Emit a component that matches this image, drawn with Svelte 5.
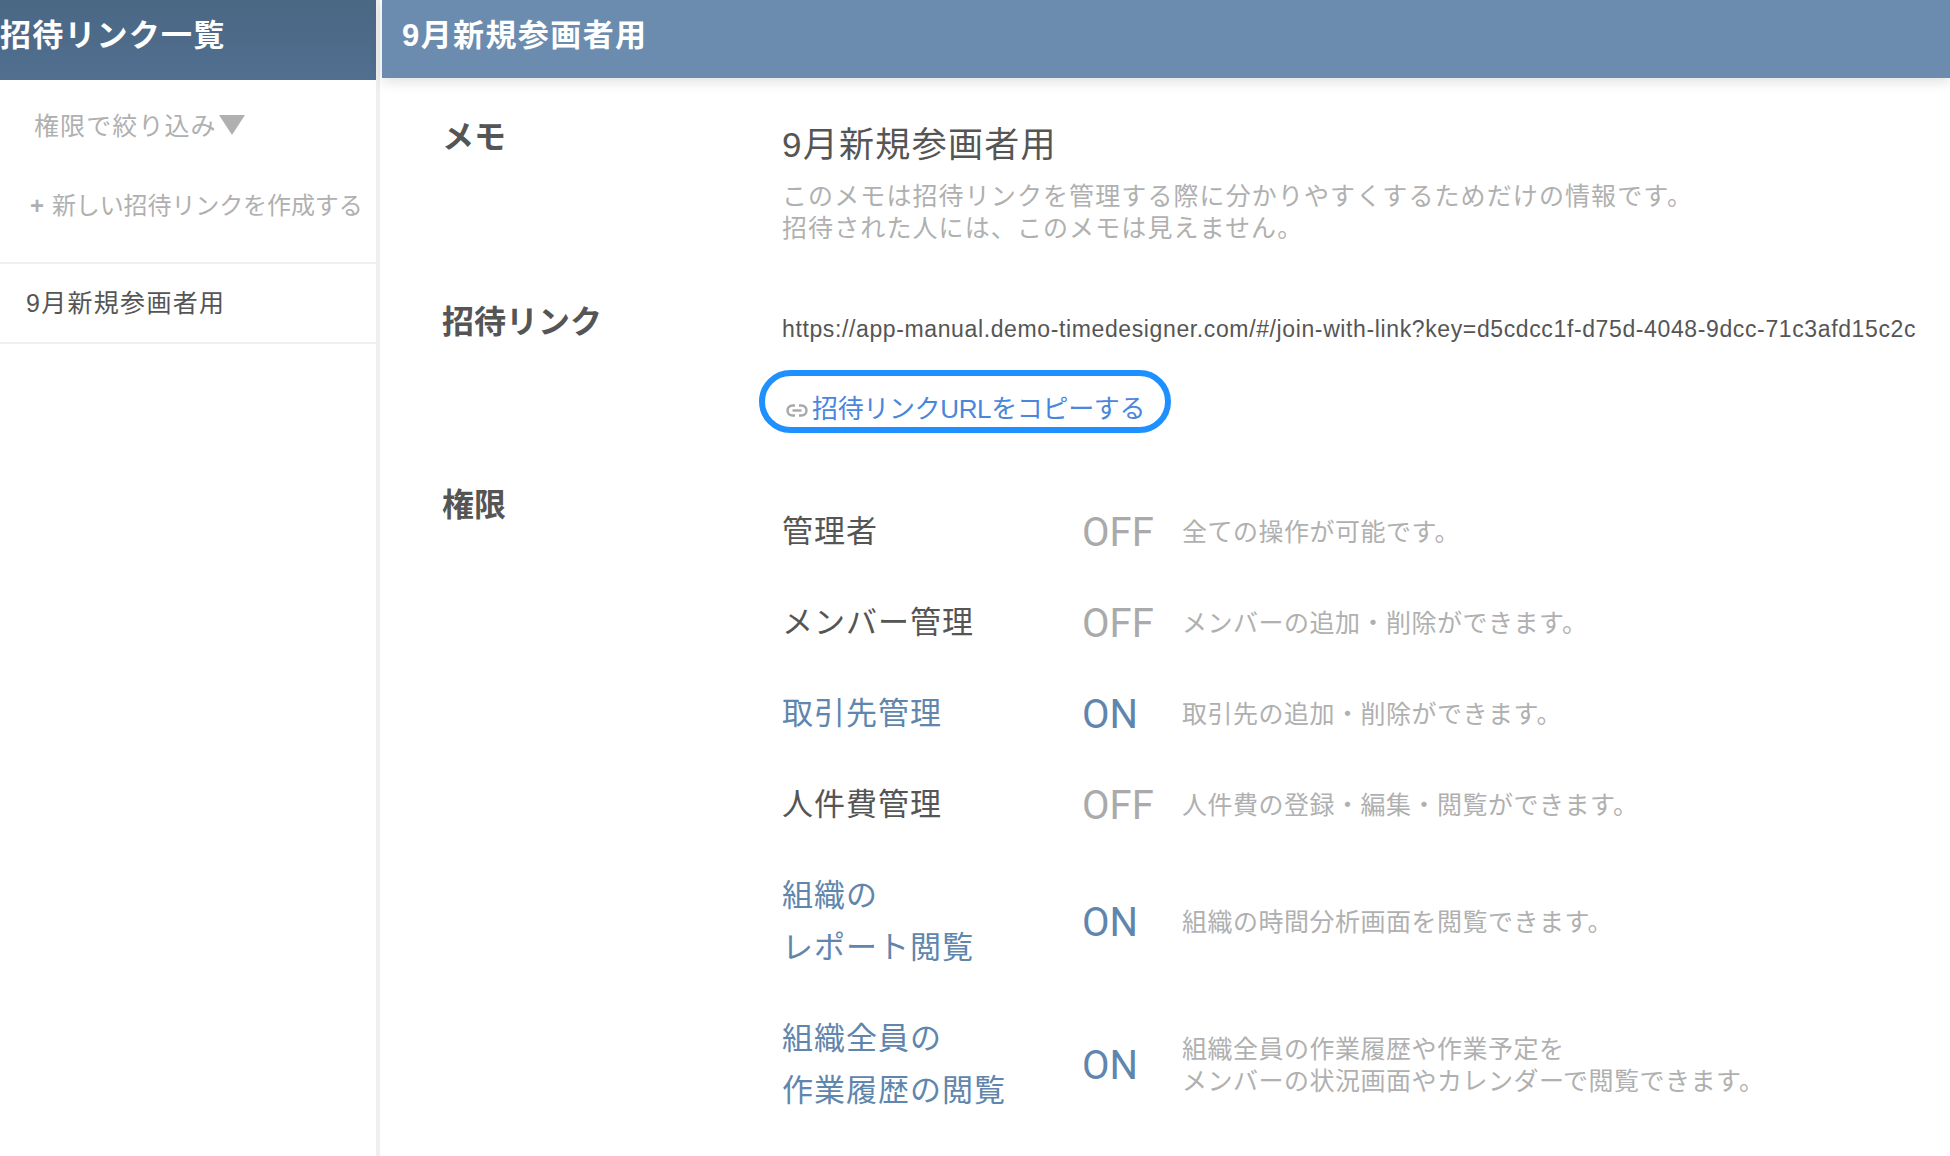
<script>
  const perms = [
    { name: ["管理者"], on: false, desc: ["全ての操作が可能です。"] },
    { name: ["メンバー管理"], on: false, desc: ["メンバーの追加・削除ができます。"] },
    { name: ["取引先管理"], on: true, desc: ["取引先の追加・削除ができます。"] },
    { name: ["人件費管理"], on: false, desc: ["人件費の登録・編集・閲覧ができます。"] },
    { name: ["組織の", "レポート閲覧"], on: true, desc: ["組織の時間分析画面を閲覧できます。"] },
    {
      name: ["組織全員の", "作業履歴の閲覧"],
      on: true,
      desc: ["組織全員の作業履歴や作業予定を", "メンバーの状況画面やカレンダーで閲覧できます。"],
    },
  ];
</script>

<div class="page">
  <aside class="side">
    <div class="side-head">招待リンク一覧</div>
    <div class="filter">権限で絞り込み<span class="tri"></span></div>
    <div class="create"><span class="plus">+</span>新しい招待リンクを作成する</div>
    <div class="item">9月新規参画者用</div>
  </aside>

  <main class="main">
    <header class="main-head">9月新規参画者用</header>
    <div class="body">
      <section class="memo">
        <h2>メモ</h2>
        <div class="memo-col">
          <div class="memo-title">9月新規参画者用</div>
          <p>このメモは招待リンクを管理する際に分かりやすくするためだけの情報です。<br />招待された人には、このメモは見えません。</p>
        </div>
      </section>

      <section class="link">
        <h2>招待リンク</h2>
        <div class="link-col">
          <div class="url">https://app-manual.demo-timedesigner.com/#/join-with-link?key=d5cdcc1f-d75d-4048-9dcc-71c3afd15c2c</div>
          <button class="copy">
            <svg width="22" height="13" viewBox="0 0 22 13" fill="none" stroke="#a8a8a8" stroke-width="2.4">
              <path d="M9 1.5H6.5a5 5 0 0 0 0 10H9" />
              <path d="M13 1.5h2.5a5 5 0 0 1 0 10H13" />
              <path d="M6.5 6.5h9" />
            </svg>
            招待リンクURLをコピーする
          </button>
        </div>
      </section>

      <section class="perm">
        <h2>権限</h2>
        <div class="perm-col">
          {#each perms as p}
            <div class="row" class:on={p.on}>
              <div class="name">
                {#each p.name as line}<div>{line}</div>{/each}
              </div>
              <div class="state">{p.on ? "ON" : "OFF"}</div>
              <div class="desc">
                {#each p.desc as line}<div>{line}</div>{/each}
              </div>
            </div>
          {/each}
        </div>
      </section>
    </div>
  </main>
</div>

<style>
  :global(body) {
    margin: 0;
    background: #fff;
    overflow: hidden;
  }

  .page {
    display: flex;
    height: 1156px;
    overflow: hidden;
    font-family: "Liberation Sans", "Noto Sans CJK JP", sans-serif;
    color: #555;
  }

  .side {
    width: 376px;
    flex: none;
    border-right: 4px solid #efefef;
    margin-right: 2px;
  }

  .side-head {
    height: 80px;
    line-height: 72px;
    font-size: 31px;
    font-weight: 700;
    letter-spacing: 1.2px;
    color: #fff;
    background: linear-gradient(#4a6784, #516f8f);
  }

  .filter {
    padding: 24px 0 0 34px;
    height: 50px;
    line-height: 44px;
    font-size: 25px;
    letter-spacing: 1.1px;
    color: #b0b0b0;
  }

  .tri {
    display: inline-block;
    margin-left: 2px;
    border-left: 13px solid transparent;
    border-right: 13px solid transparent;
    border-top: 20px solid #b0b0b0;
  }

  .create {
    margin-top: 32px;
    padding: 0 0 36px 30px;
    line-height: 40px;
    font-size: 24px;
    letter-spacing: -0.1px;
    color: #b0b0b0;
    border-bottom: 2px solid #f0f0f0;
    white-space: nowrap;
  }

  .plus {
    margin-right: 8px;
    font-weight: 700;
  }

  .item {
    height: 78px;
    line-height: 78px;
    padding-left: 26px;
    font-size: 25px;
    letter-spacing: 1.3px;
    border-bottom: 2px solid #f0f0f0;
  }

  .main {
    flex: 1;
    min-width: 0;
  }

  .main-head {
    height: 78px;
    line-height: 72px;
    padding-left: 20px;
    font-size: 31px;
    font-weight: 700;
    letter-spacing: 1.4px;
    color: #fff;
    background: #6b8cae;
    box-shadow: 0 4px 12px rgba(0, 0, 0, 0.12);
  }

  .body {
    padding: 36px 0 0 60px;
  }

  section {
    display: flex;
  }

  h2 {
    width: 340px;
    flex: none;
    margin: 1px 0 0;
    font-size: 32px;
    line-height: 44px;
    font-weight: 700;
    color: #555;
  }

  .memo {
    height: 185px;
  }

  .memo-title {
    margin-top: 6px;
    font-size: 35px;
    line-height: 50px;
    letter-spacing: 1.3px;
  }

  .memo p {
    margin: 10px 0 0;
    font-size: 25px;
    line-height: 32px;
    letter-spacing: 1.1px;
    color: #b0b0b0;
  }

  .link {
    height: 169px;
  }

  .url {
    margin-top: 8px;
    font-size: 23px;
    line-height: 44px;
    letter-spacing: 0.62px;
    white-space: nowrap;
    color: #555;
  }

  .copy {
    display: flex;
    align-items: flex-end;
    gap: 4px;
    margin: 19px 0 0 -23px;
    width: 412px;
    height: 63px;
    padding: 0 20px 0 21px;
    box-sizing: border-box;
    border: 6px solid #1e90ff;
    border-radius: 32px;
    background: #fff;
    font: inherit;
    font-size: 26px;
    line-height: 36px;
    letter-spacing: -0.35px;
    color: #4a86dc;
    white-space: nowrap;
  }

  .copy svg {
    flex: none;
    margin-bottom: 10px;
  }

  .perm h2 {
    margin-top: 15px;
  }

  .perm-col {
    padding-top: 18px;
  }

  .row {
    display: flex;
    align-items: center;
    min-height: 91px;
  }

  .name {
    width: 300px;
    flex: none;
    font-size: 31px;
    line-height: 52px;
    letter-spacing: 1px;
  }

  .state {
    width: 100px;
    flex: none;
    padding-top: 2px;
    font-family: Roboto, "Liberation Sans", sans-serif;
    font-size: 40px;
    color: #aaa;
  }

  .desc {
    font-size: 25px;
    line-height: 32px;
    letter-spacing: 0.5px;
    color: #b0b0b0;
  }

  .row.on .name,
  .row.on .state {
    color: #6086ad;
  }

  .row:nth-child(n + 5) {
    min-height: 143px;
  }
</style>
